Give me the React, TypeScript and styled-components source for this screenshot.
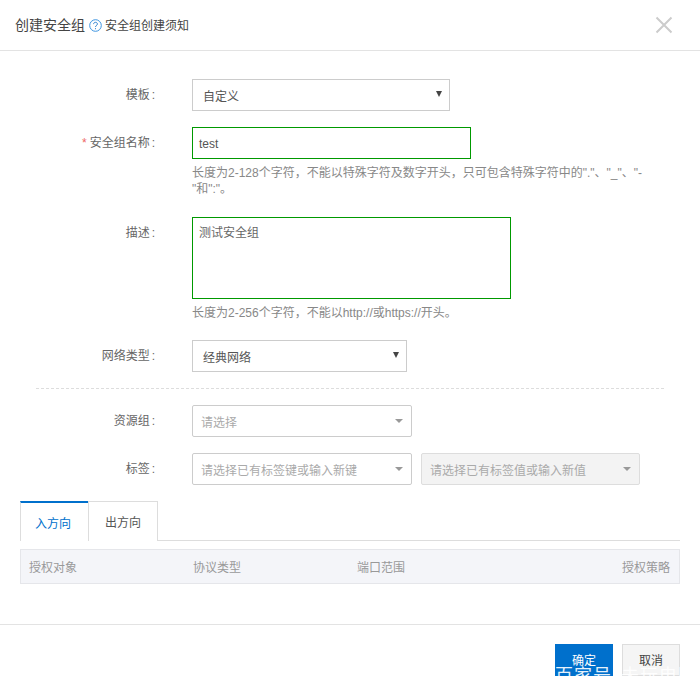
import styled, { createGlobalStyle } from 'styled-components'

const GlobalStyle = createGlobalStyle`
  html, body {
    margin: 0;
    padding: 0;
    background: #fff;
  }
  * {
    box-sizing: border-box;
  }
`

const fontStack = `"Liberation Sans", "Noto Sans CJK SC", sans-serif`

const Dialog = styled.div`
  position: relative;
  width: 700px;
  height: 696px;
  display: flex;
  flex-direction: column;
  background: #fff;
  font-family: ${fontStack};
  font-size: 12px;
  color: #666;
  overflow: hidden;
`

const Header = styled.header`
  height: 51px;
  flex: none;
  display: flex;
  align-items: center;
  justify-content: space-between;
  padding: 0 27px 0 15px;
  border-bottom: 1px solid #e3e3e3;
`

const Title = styled.div`
  display: flex;
  align-items: center;
  margin-top: -2px;
  font-size: 14px;
  color: #444;
`

const NoticeLink = styled.span`
  font-size: 12px;
  color: #444;
`

const HelpIcon = styled.svg`
  width: 13px;
  height: 13px;
  margin: 3px 3px 0 4px;
`

const CloseIcon = styled.svg`
  width: 18px;
  height: 18px;
`

const Form = styled.div`
  flex: none;
  padding-top: 28px;
  display: flex;
  flex-direction: column;
`

const Row = styled.div<{ $mb: number }>`
  display: flex;
  align-items: flex-start;
  margin-bottom: ${(p) => p.$mb}px;
`

const Label = styled.label`
  width: 155px;
  flex: none;
  margin-right: 37px;
  height: 32px;
  line-height: 32px;
  text-align: right;
  color: #666;
  white-space: nowrap;
`

const Colon = styled.span`
  margin-left: 2px;
`

const Star = styled.span`
  color: #e66;
  margin-right: 3px;
`

const Field = styled.div`
  flex: 1;
  min-width: 0;
`

const NativeSelect = styled.div<{ $w: number }>`
  width: ${(p) => p.$w}px;
  height: 32px;
  display: flex;
  align-items: center;
  justify-content: space-between;
  padding: 0 7px 0 10px;
  border: 1px solid #ccc;
  color: #555;
  background: #fff;
`

const NativeArrow = styled.span`
  width: 0;
  height: 0;
  border-left: 3px solid transparent;
  border-right: 3px solid transparent;
  border-top: 6px solid #444;
  margin-top: -2px;
`

const TextInput = styled.div`
  width: 279px;
  height: 32px;
  line-height: 30px;
  padding: 1px 6px 0;
  border: 1px solid #090;
  color: #555;
`

const TextArea = styled.div`
  width: 319px;
  height: 82px;
  padding: 7px 6px;
  line-height: 16px;
  border: 1px solid #090;
  color: #666;
`

const Help = styled.p`
  width: 460px;
  margin: 6px 0 0;
  line-height: 16px;
  color: #888;
`

const Divider = styled.hr`
  width: 628px;
  margin: 0 0 16px 36px;
  border: 0;
  border-top: 1px dashed #ddd;
`

const ComboRow = styled.div`
  display: flex;
  gap: 9px;
`

const Combo = styled.div<{ $w: number; $disabled?: boolean }>`
  width: ${(p) => p.$w}px;
  height: 32px;
  display: flex;
  align-items: center;
  justify-content: space-between;
  padding: 0 8px;
  border: 1px solid ${(p) => (p.$disabled ? '#ddd' : '#ccc')};
  border-radius: 2px;
  background: ${(p) => (p.$disabled ? '#f3f3f3' : '#fff')};
  color: #aaa;
`

const ComboArrow = styled.span`
  width: 0;
  height: 0;
  border-left: 4px solid transparent;
  border-right: 4px solid transparent;
  border-top: 4px solid #999;
`

const Tabs = styled.div`
  margin: 0 20px;
  height: 40px;
  display: flex;
  border-bottom: 1px solid #ddd;
`

const Tab = styled.div<{ $active?: boolean }>`
  height: 40px;
  display: flex;
  align-items: center;
  justify-content: center;
  color: ${(p) => (p.$active ? '#0070cc' : '#555')};
  background: #fff;
  border-style: solid;
  border-color: #ddd;
  border-width: ${(p) => (p.$active ? '2px 0 0 1px' : '1px 1px 0 1px')};
  border-top-color: ${(p) => (p.$active ? '#0070cc' : '#ddd')};
  width: ${(p) => (p.$active ? '68px' : '70px')};
  padding-right: ${(p) => (p.$active ? '3px' : '0')};
`

const TableHead = styled.div`
  margin: 8px 20px 0;
  height: 35px;
  display: grid;
  grid-template-columns: 164px 164px 1fr auto;
  align-items: center;
  padding: 0 9px 0 8px;
  background: #f4f5f9;
  border: 1px solid #e5e6ea;
  color: #999;
`

const Footer = styled.footer`
  margin-top: 40px;
  border-top: 1px solid #e3e3e3;
  padding: 19px 20px 0;
  display: flex;
  justify-content: flex-end;
  gap: 9px;
`

const Button = styled.button<{ $primary?: boolean }>`
  width: 58px;
  height: 32px;
  padding: 0 0 1px;
  font-family: ${fontStack};
  font-size: 12px;
  background: ${(p) => (p.$primary ? '#0070cc' : '#f5f5f5')};
  color: ${(p) => (p.$primary ? '#fff' : '#444')};
  border: 1px solid ${(p) => (p.$primary ? '#0070cc' : '#ddd')};
`

const WatermarkStrip = styled.div`
  position: absolute;
  left: 555px;
  top: 666px;
  width: 125px;
  height: 10px;
  overflow: hidden;
  color: #fff;
  font-size: 18px;
  line-height: 20px;
  letter-spacing: 1px;
  white-space: nowrap;
  display: flex;
  gap: 9px;
  opacity: 0.9;
`

const App = () => (
  <>
    <GlobalStyle />
    <Dialog>
      <Header>
        <Title>
          创建安全组
          <HelpIcon viewBox="0 0 13 13" fill="none">
            <circle cx="6.5" cy="6.5" r="5.8" stroke="#3d94e0" strokeWidth="1" />
            <path d="M4.6 5.1c0-1.1.9-1.8 1.9-1.8s1.9.7 1.9 1.7c0 1.4-1.9 1.5-1.9 3" stroke="#2a7fd0" strokeWidth="1" />
            <rect x="6" y="9.2" width="1" height="1" fill="#2a7fd0" />
          </HelpIcon>
          <NoticeLink>安全组创建须知</NoticeLink>
        </Title>
        <CloseIcon viewBox="0 0 18 18" fill="none">
          <path d="M1.5 1.5l15 15M16.5 1.5l-15 15" stroke="#ccc" strokeWidth="2" />
        </CloseIcon>
      </Header>

      <Form>
        <Row $mb={16}>
          <Label>模板<Colon>:</Colon></Label>
          <Field>
            <NativeSelect $w={258}>
              自定义
              <NativeArrow />
            </NativeSelect>
          </Field>
        </Row>
        <Row $mb={20}>
          <Label>
            <Star>*</Star>安全组名称<Colon>:</Colon>
          </Label>
          <Field>
            <TextInput>test</TextInput>
            <Help>
              长度为2-128个字符，不能以特殊字符及数字开头，只可包含特殊字符中的"."、"_"、"-"和":"。
            </Help>
          </Field>
        </Row>
        <Row $mb={19}>
          <Label>描述<Colon>:</Colon></Label>
          <Field>
            <TextArea>测试安全组</TextArea>
            <Help>长度为2-256个字符，不能以http://或https://开头。</Help>
          </Field>
        </Row>
        <Row $mb={16}>
          <Label>网络类型<Colon>:</Colon></Label>
          <Field>
            <NativeSelect $w={215}>
              经典网络
              <NativeArrow />
            </NativeSelect>
          </Field>
        </Row>
        <Divider />
        <Row $mb={16}>
          <Label>资源组<Colon>:</Colon></Label>
          <Field>
            <Combo $w={220}>
              请选择
              <ComboArrow />
            </Combo>
          </Field>
        </Row>
        <Row $mb={16}>
          <Label>标签<Colon>:</Colon></Label>
          <ComboRow>
            <Combo $w={220}>
              请选择已有标签键或输入新键
              <ComboArrow />
            </Combo>
            <Combo $w={219} $disabled>
              请选择已有标签值或输入新值
              <ComboArrow />
            </Combo>
          </ComboRow>
        </Row>
      </Form>

      <Tabs>
        <Tab $active>入方向</Tab>
        <Tab>出方向</Tab>
      </Tabs>
      <TableHead>
        <span>授权对象</span>
        <span>协议类型</span>
        <span>端口范围</span>
        <span>授权策略</span>
      </TableHead>

      <Footer>
        <Button $primary>确定</Button>
        <Button>取消</Button>
      </Footer>
      <WatermarkStrip>
        <span>百家号</span>
        <span>未玩电脑</span>
      </WatermarkStrip>
    </Dialog>
  </>
)

export default App
